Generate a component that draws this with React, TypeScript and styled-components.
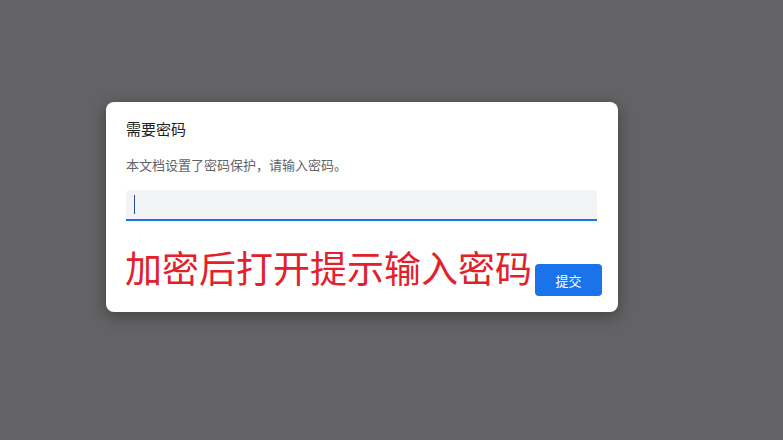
import React from "react";
import styled, { createGlobalStyle } from "styled-components";

const GlobalStyle = createGlobalStyle`
  html, body {
    margin: 0;
    padding: 0;
    background: #636365;
    width: 783px;
    height: 440px;
    overflow: hidden;
    font-family: "Noto Sans CJK SC", "Noto Sans", "Liberation Sans", sans-serif;
  }
`;

const Backdrop = styled.div`
  width: 783px;
  height: 440px;
  box-sizing: border-box;
  padding: 102px 0 0 106px;
`;

const Dialog = styled.div`
  width: 512px;
  height: 210px;
  box-sizing: border-box;
  background: #ffffff;
  border-radius: 8px;
  box-shadow: 0 4px 16px rgba(0, 0, 0, 0.35);
  padding: 17px 16px 15px 20px;
  display: flex;
  flex-direction: column;
`;

const Title = styled.div`
  font-size: 15px;
  line-height: 20px;
  color: #202124;
`;

const Message = styled.div`
  margin-top: 17px;
  font-size: 13px;
  line-height: 18px;
  color: #5f6368;
`;

const PasswordField = styled.div`
  margin-top: 16px;
  margin-right: 5px;
  height: 31px;
  box-sizing: border-box;
  background: #f1f3f4;
  border-radius: 4px 4px 0 0;
  border-bottom: 2px solid #1a73e8;
  display: flex;
  align-items: center;
  padding-left: 8px;
`;

const Caret = styled.span`
  width: 1px;
  height: 19px;
  background: #2a4f8f;
`;

const Footer = styled.div`
  margin-top: 24px;
  display: flex;
  justify-content: space-between;
  align-items: flex-start;
`;

const Annotation = styled.div`
  font-size: 37px;
  line-height: 44px;
  color: #e2212b;
  margin-left: -1px;
  white-space: nowrap;
`;

const SubmitButton = styled.button`
  margin-top: 19px;
  width: 67px;
  height: 32px;
  border: none;
  border-radius: 4px;
  background: #1a73e8;
  color: #ffffff;
  font-family: inherit;
  font-size: 13px;
  padding: 0;
  cursor: pointer;
`;

export default function App() {
  return (
    <>
      <GlobalStyle />
      <Backdrop>
        <Dialog>
          <Title>需要密码</Title>
          <Message>本文档设置了密码保护，请输入密码。</Message>
          <PasswordField role="textbox" aria-label="密码">
            <Caret />
          </PasswordField>
          <Footer>
            <Annotation>加密后打开提示输入密码</Annotation>
            <SubmitButton>提交</SubmitButton>
          </Footer>
        </Dialog>
      </Backdrop>
    </>
  );
}
